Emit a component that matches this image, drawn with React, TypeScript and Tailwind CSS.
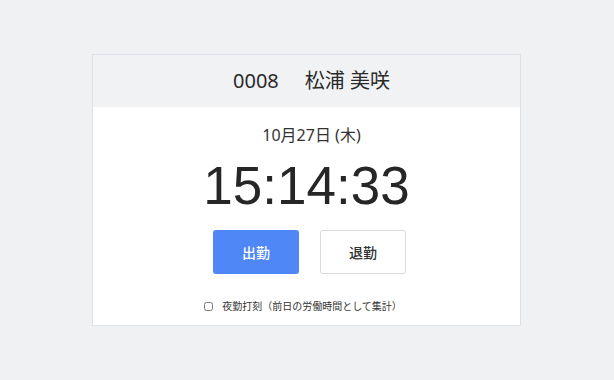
import { useState } from "react";

export default function App() {
  const [nightShift, setNightShift] = useState(false);

  return (
    <div
      className="w-[614px] h-[380px] bg-[#f0f1f3] pt-[54px] pl-[92px]"
      style={{ fontFamily: '"Noto Sans", "Noto Sans CJK JP", sans-serif' }}
    >
      <div className="w-[429px] h-[272px] bg-white border border-[#dde0e6] flex flex-col">
        {/* Header */}
        <div className="h-[52px] pl-[10px] bg-[#f1f2f4] flex items-center justify-center gap-[26px] text-[20px] text-[#2a2a2a]">
          <span>0008</span>
          <span>松浦 美咲</span>
        </div>

        {/* Clock */}
        <div className="flex flex-col items-center">
          <p className="mt-[17px] pl-[10px] text-[16px] leading-[22px] text-[#333]">10月27日 (木)</p>
          <p
            className="mt-[9px] text-[53px] leading-[62px] text-[#262626]"
            style={{ fontFamily: '"Liberation Sans", Arial, sans-serif' }}
          >
            15:14:33
          </p>

          {/* Actions */}
          <div className="mt-[13px] pl-[6px] flex gap-[21px]">
            <button className="w-[86px] h-[44px] rounded-[3px] bg-[#4f87f6] text-white text-[14px] font-medium">
              出勤
            </button>
            <button className="w-[86px] h-[44px] rounded-[3px] bg-white border border-[#d7d9dd] text-[#333] text-[14px] font-medium">
              退勤
            </button>
          </div>

          <label className="mt-[25px] pr-[7px] h-[14px] flex items-center gap-[9px] text-[10px] leading-[14px] text-[#333]">
            <input
              type="checkbox"
              checked={nightShift}
              onChange={(e) => setNightShift(e.target.checked)}
              className="w-[9px] h-[9px] m-0"
            />
            夜勤打刻（前日の労働時間として集計）
          </label>
        </div>
      </div>
    </div>
  );
}
